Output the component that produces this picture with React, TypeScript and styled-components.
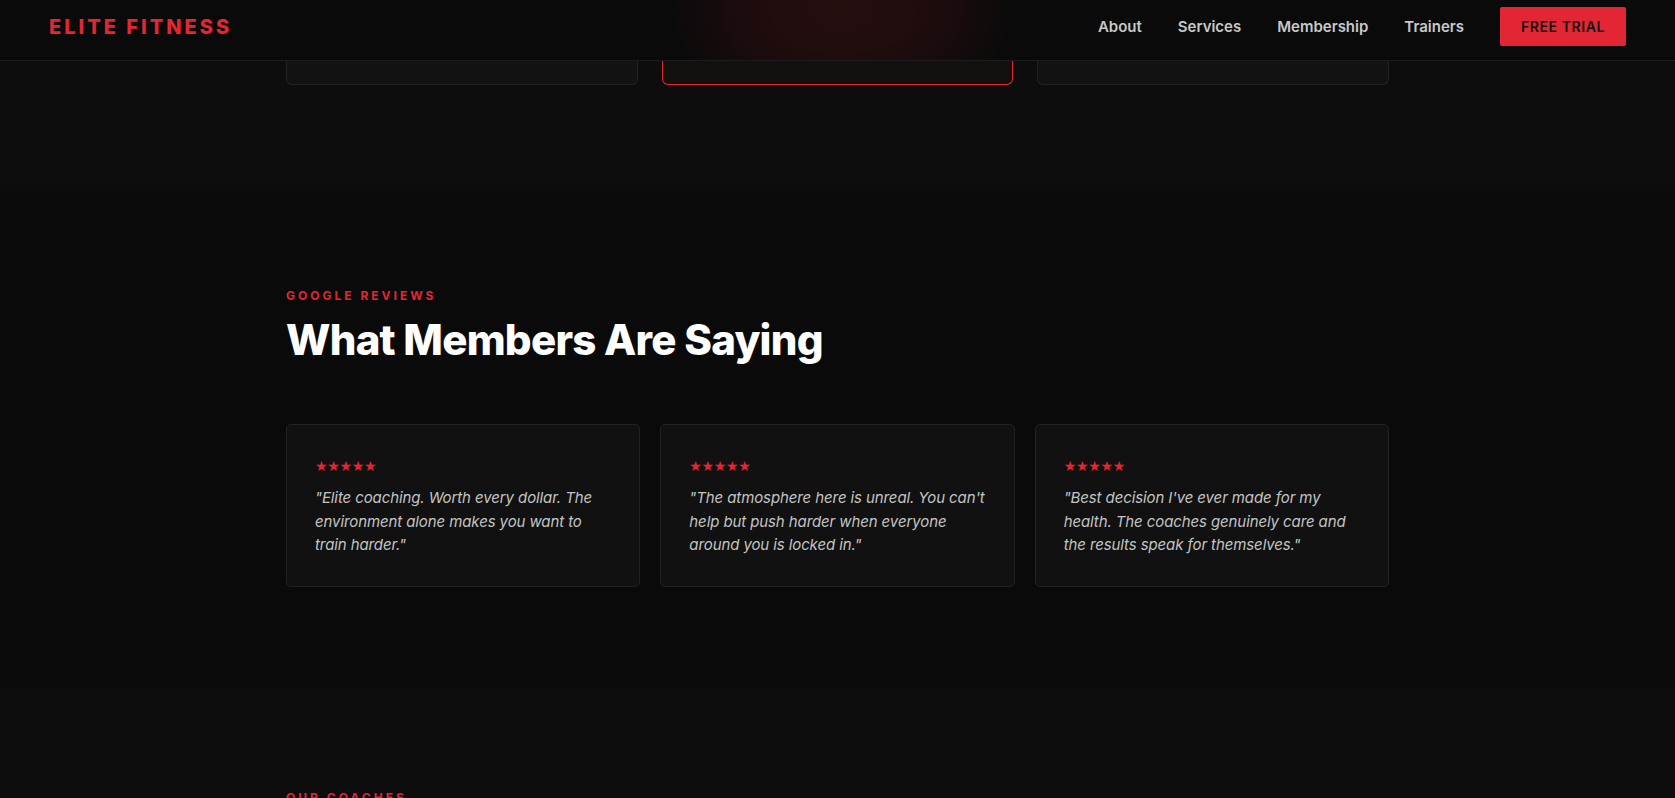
import styled, { createGlobalStyle } from 'styled-components'

const RED = '#e22633'

const navLinks = ['About', 'Services', 'Membership', 'Trainers']

const reviews = [
    '"Elite coaching. Worth every dollar. The environment alone makes you want to train harder."',
    '"The atmosphere here is unreal. You can\'t help but push harder when everyone around you is locked in."',
    '"Best decision I\'ve ever made for my health. The coaches genuinely care and the results speak for themselves."',
]

export default function App() {
    return (
        <>
            <GlobalStyle />
            <Header>
                <Logo>ELITE FITNESS</Logo>
                <Nav>
                    {navLinks.map((link) => (
                        <NavLink key={link} href="#">
                            {link}
                        </NavLink>
                    ))}
                    <TrialButton>FREE TRIAL</TrialButton>
                </Nav>
            </Header>

            <PricingSection>
                <Container>
                    <PlanRow>
                        <PlanCard />
                        <PlanCard $featured />
                        <PlanCard />
                    </PlanRow>
                </Container>
            </PricingSection>

            <ReviewsSection>
                <Container>
                    <Eyebrow>GOOGLE REVIEWS</Eyebrow>
                    <Title>What Members Are Saying</Title>
                    <ReviewGrid>
                        {reviews.map((text) => (
                            <ReviewCard key={text}>
                                <Stars>★★★★★</Stars>
                                <Quote>{text}</Quote>
                            </ReviewCard>
                        ))}
                    </ReviewGrid>
                </Container>
            </ReviewsSection>

            <CoachesSection>
                <Container>
                    <Eyebrow>OUR COACHES</Eyebrow>
                </Container>
            </CoachesSection>
        </>
    )
}

const GlobalStyle = createGlobalStyle`
    * {
        box-sizing: border-box;
    }
    html, body {
        margin: 0;
        padding: 0;
        background: #0a0a0a;
        overflow: hidden;
    }
    body {
        font-family: Inter, "Noto Sans", "DejaVu Sans", sans-serif;
        color: #fff;
        -webkit-font-smoothing: antialiased;
    }
`

const Header = styled.header`
    position: fixed;
    top: 0;
    left: 0;
    right: 0;
    z-index: 10;
    height: 61px;
    display: flex;
    align-items: center;
    justify-content: space-between;
    padding: 0 49px 7px;
    background:
        radial-gradient(ellipse 175px 110px at 842px 10px, rgba(225, 35, 47, 0.13) 0%, rgba(225, 35, 47, 0.09) 55%, rgba(225, 35, 47, 0) 100%),
        #0a0a0a;
    border-bottom: 1px solid #1c1c1c;
`

const Logo = styled.div`
    font-size: 20px;
    font-weight: 800;
    letter-spacing: 3px;
    color: ${RED};
`

const Nav = styled.nav`
    display: flex;
    align-items: center;
    gap: 36px;
`

const NavLink = styled.a`
    font-size: 15px;
    font-weight: 600;
    color: #c8c8c8;
    text-decoration: none;
`

const TrialButton = styled.button`
    height: 39px;
    width: 126px;
    border: none;
    border-radius: 2px;
    background: ${RED};
    color: #111;
    font-family: inherit;
    font-size: 14px;
    font-weight: 600;
    letter-spacing: 0.6px;
    cursor: pointer;
`

const Container = styled.div`
    width: 1103px;
    margin: 0 auto;
`

const PricingSection = styled.section`
    background: #0d0d0d;
    padding-bottom: 106px;
`

const PlanRow = styled.div`
    display: grid;
    grid-template-columns: repeat(3, 1fr);
    gap: 24px;
`

const PlanCard = styled.div<{ $featured?: boolean }>`
    height: 85px;
    border: 1px solid ${(p) => (p.$featured ? RED : '#222')};
    border-top: none;
    border-radius: 0 0 6px 6px;
    background: ${(p) => (p.$featured ? '#141010' : '#121212')};
`

const ReviewsSection = styled.section`
    background: #0a0a0a;
    padding: 96px 0 101px;
`

const Eyebrow = styled.div`
    font-size: 12px;
    line-height: 18px;
    font-weight: 700;
    letter-spacing: 3px;
    color: ${RED};
`

const Title = styled.h2`
    margin: 10px 0 59px;
    font-size: 42px;
    line-height: 1.2;
    font-weight: 800;
    letter-spacing: -0.75px;
    color: #fff;
`

const ReviewGrid = styled.div`
    display: grid;
    grid-template-columns: repeat(3, 1fr);
    gap: 20px;
`

const ReviewCard = styled.div`
    padding: 28px 24px 30px 28px;
    border: 1px solid #222;
    border-radius: 5px;
    background: #111;
`

const Stars = styled.div`
    font-family: "DejaVu Sans", sans-serif;
    font-size: 14px;
    line-height: 21px;
    letter-spacing: -0.3px;
    color: ${RED};
    margin: 3px 0 9px;
`

const Quote = styled.p`
    margin: 0;
    font-size: 15px;
    line-height: 1.55;
    font-style: italic;
    letter-spacing: -0.1px;
    color: #c4c4c4;
`

const CoachesSection = styled.section`
    background: #0d0d0d;
    padding-top: 101px;
    height: 400px;
`
